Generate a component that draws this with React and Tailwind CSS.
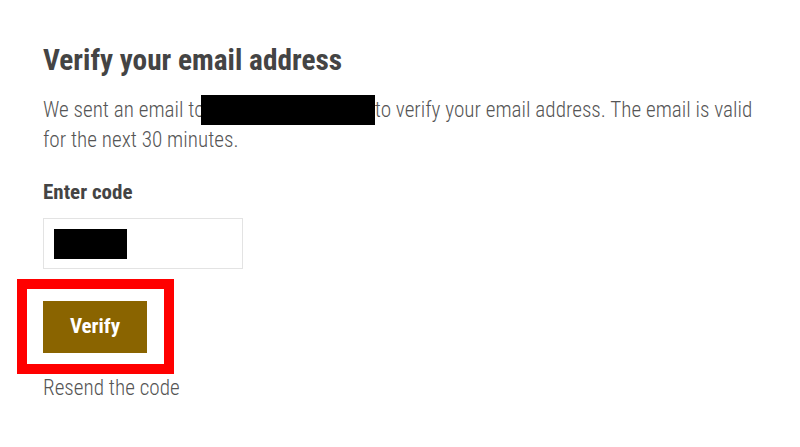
export default function App() {
  return (
    <div className="relative h-[447px] w-[800px] bg-white font-['Roboto_Condensed','Roboto',sans-serif] font-stretch-condensed">
      <div className="pl-[43px] pt-[42px] pr-[40px]">
        <h1 className="text-[29.3px] font-bold leading-[36px] text-[#444444]">Verify your email address</h1>

        <p className="mt-[17px] text-[21.2px] font-light leading-[30px] text-[#555555]">
          We sent an email to
          <span className="relative -ml-[4px] inline-block h-[30px] w-[174px] bg-black align-top" />
          to verify your email address. The email is valid for the next 30 minutes.
        </p>

        <p className="mt-[25px] text-[21px] font-bold leading-[24px] text-[#444444]">Enter code</p>

        <div className="mt-[14px] flex h-[51px] w-[200px] items-center border border-[#e3e3e3] px-[10px]">
          <span className="h-[30px] w-[73px] bg-black" />
        </div>

        <div className="relative mt-[32px] w-fit">
          <button className="h-[52px] w-[104px] bg-[#8a6400] text-[21px] font-bold text-white">Verify</button>
          <div className="pointer-events-none absolute -left-[26px] -top-[22px] h-[95px] w-[157px] border-[10px] border-[#ff0000]" />
        </div>

        <p className="mt-[23px] text-[21.2px] font-light leading-[24px] text-[#555555]">Resend the code</p>
      </div>
    </div>
  );
}
